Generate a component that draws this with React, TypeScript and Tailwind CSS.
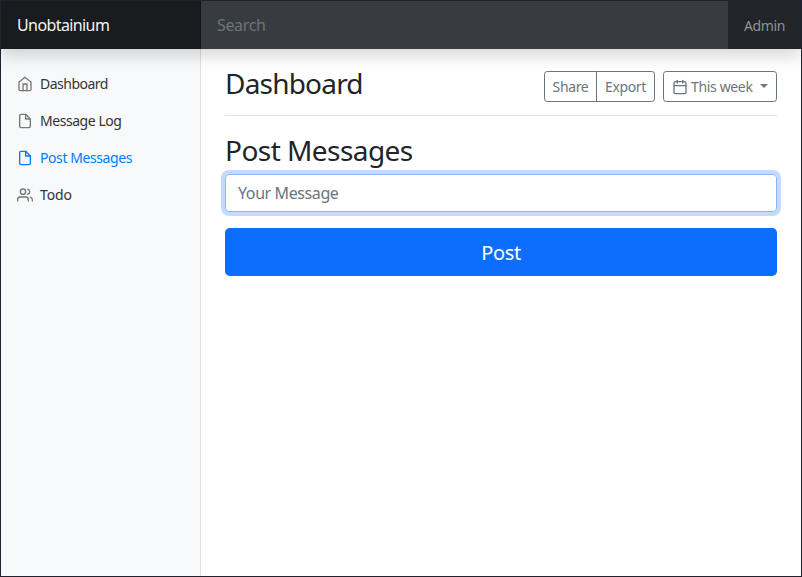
import type { ReactNode } from "react";

function Icon({ children, className = "" }: { children: ReactNode; className?: string }) {
  return (
    <svg
      className={`size-4 shrink-0 ${className}`}
      viewBox="0 0 24 24"
      fill="none"
      stroke="currentColor"
      strokeWidth="2"
      strokeLinecap="round"
      strokeLinejoin="round"
    >
      {children}
    </svg>
  );
}

const home = (
  <>
    <path d="M3 9l9-7 9 7v11a2 2 0 0 1-2 2H5a2 2 0 0 1-2-2z" />
    <polyline points="9 22 9 12 15 12 15 22" />
  </>
);

const file = (
  <>
    <path d="M13 2H6a2 2 0 0 0-2 2v16a2 2 0 0 0 2 2h12a2 2 0 0 0 2-2V9z" />
    <polyline points="13 2 13 9 20 9" />
  </>
);

const users = (
  <>
    <path d="M17 21v-2a4 4 0 0 0-4-4H5a4 4 0 0 0-4 4v2" />
    <circle cx="9" cy="7" r="4" />
    <path d="M23 21v-2a4 4 0 0 0-3-3.87" />
    <path d="M16 3.13a4 4 0 0 1 0 7.75" />
  </>
);

const links = [
  { label: "Dashboard", icon: home, active: false, tracking: "tracking-[-0.5px]" },
  { label: "Message Log", icon: file, active: false, tracking: "tracking-[-0.45px]" },
  { label: "Post Messages", icon: file, active: true, tracking: "tracking-[-0.42px]" },
  { label: "Todo", icon: users, active: false, tracking: "tracking-[-0.1px]" },
];

export default function App() {
  return (
    <div className="flex h-[577px] w-[802px] flex-col overflow-hidden border border-[#20222f] bg-white font-['Noto_Sans',sans-serif] text-[#212529]">
      <header className="relative z-10 flex h-12 shrink-0 bg-[#212529] shadow-[0_8px_16px_rgba(0,0,0,0.15)]">
        <div className="flex w-[200px] items-center bg-[#191c1f] pl-4 text-[16px] tracking-[-0.6px] text-[#f4f4f4] shadow-[inset_-1px_0_0_rgba(0,0,0,0.25)]">
          Unobtainium
        </div>
        <input
          className="min-w-0 flex-1 bg-[#383b3f] px-4 text-[16px] tracking-[-0.35px] text-white outline-none placeholder:text-[#6c757d]"
          placeholder="Search"
        />
        <a className="flex w-[73px] items-center pl-4 text-[14px] tracking-[-0.4px] text-[#909294]">Admin</a>
      </header>

      <div className="flex min-h-0 flex-1">
        <nav className="w-[200px] shrink-0 border-r border-[#dddfe1] bg-[#f8f9fa] pt-4">
          {links.map((link) => (
            <a
              key={link.label}
              className={`flex h-[37px] items-center pl-4 text-[14px] ${link.active ? "text-[#007bff]" : "text-[#333333]"}`}
            >
              <Icon className={link.active ? "mr-[7px]" : "mr-[7px] text-[#777777]"}>{link.icon}</Icon>
              <span className={`whitespace-nowrap ${link.tracking}`}>{link.label}</span>
            </a>
          ))}
        </nav>

        <main className="flex-1 px-6 pt-4">
          <div className="flex h-[51px] items-start justify-between border-b border-[#dee2e6]">
            <h1 className="pt-px text-[28px] leading-[34px] tracking-[-0.8px]">Dashboard</h1>
            <div className="mt-[6px] flex h-[31px] gap-2 text-[14px] tracking-[-0.35px] text-[#6c757d]">
              <div className="flex">
                <button className="w-[53px] rounded-l-[3.2px] border border-[#6c757d]">Share</button>
                <button className="-ml-px w-[59px] rounded-r-[3.2px] border border-[#6c757d]">Export</button>
              </div>
              <button className="flex w-[114px] items-center rounded-[3.2px] border border-[#6c757d] pl-2">
                <Icon>
                  <rect x="3" y="4" width="18" height="18" rx="2" />
                  <line x1="16" y1="2" x2="16" y2="6" />
                  <line x1="8" y1="2" x2="8" y2="6" />
                  <line x1="3" y1="10" x2="21" y2="10" />
                </Icon>
                <span className="ml-[3px] w-[62px] text-left whitespace-nowrap">This week</span>
                <span className="-mt-0.5 ml-[7px] border-x-4 border-t-4 border-x-transparent border-t-[#6c757d]" />
              </button>
            </div>
          </div>

          <h2 className="mt-4 h-[34px] pt-px text-[28px] leading-[34px] tracking-[-0.55px]">Post Messages</h2>
          <input
            className="mt-2 block h-[38px] w-full rounded border border-[#86b7fe] px-3 text-[16px] tracking-[-0.4px] shadow-[0_0_0_4px_rgba(13,110,253,0.25)] outline-none placeholder:text-[#6c757d]"
            placeholder="Your Message"
          />
          <button className="mt-4 h-12 w-full rounded-[4.8px] bg-[#0d6efd] pt-0.5 text-[20px] tracking-[-0.4px] text-white">Post</button>
        </main>
      </div>
    </div>
  );
}
